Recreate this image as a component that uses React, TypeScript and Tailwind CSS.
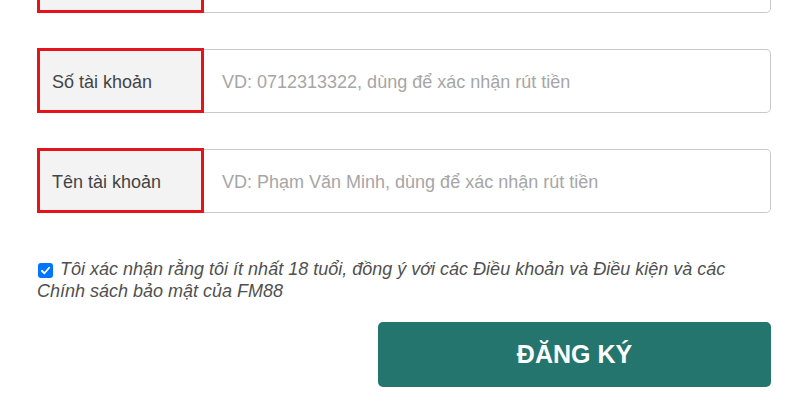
import React from "react";

const fields = [
    { label: "", placeholder: "" },
    { label: "Số tài khoản", placeholder: "VD: 0712313322, dùng để xác nhận rút tiền" },
    { label: "Tên tài khoản", placeholder: "VD: Phạm Văn Minh, dùng để xác nhận rút tiền" },
];

function FieldRow({ label, placeholder }: { label: string; placeholder: string }) {
    return (
        <div className="flex h-[65px]">
            <div className="w-[167px] shrink-0 h-full flex items-center pl-3 pt-[3px] border-[3px] border-[#e5141b] bg-[#f3f3f4] text-[18px] text-[#444]">
                {label}
            </div>
            <input
                placeholder={placeholder}
                className="flex-1 min-w-0 h-[64px] self-end border border-l-0 border-[#c9c9c9] rounded-r-[5px] px-[18px] pt-[2px] text-[18px] text-[#333] outline-none placeholder:text-[#a6a6a6] bg-white"
            />
        </div>
    );
}

export default function App() {
    return (
        <div className="w-[800px] h-[400px] overflow-hidden bg-white font-['Liberation_Sans',Arial,sans-serif]">
            <div className="ml-[37px] w-[734px] -mt-[52px] flex flex-col">
                <div className="flex flex-col gap-[35px]">
                    {fields.map((f, i) => (
                        <FieldRow key={i} label={f.label} placeholder={f.placeholder} />
                    ))}
                </div>

                {/* Terms */}
                <p className="mt-[45px] text-[18px] leading-[22px] italic text-[#505050]">
                    <span className="inline-flex items-center justify-center w-[15px] h-[15px] rounded-[3px] bg-[#0075ff] align-[-1px] mr-[7px] ml-px">
                        <svg viewBox="0 0 12 12" className="w-[11px] h-[11px]" fill="none">
                            <path d="M2 6.3 L4.8 9 L10 3" stroke="white" strokeWidth="2" strokeLinecap="round" strokeLinejoin="round" />
                        </svg>
                    </span>
                    Tôi xác nhận rằng tôi ít nhất 18 tuổi, đồng ý với các Điều khoản và Điều kiện và các Chính sách bảo mật của FM88
                </p>

                <button className="self-end mt-[20px] w-[393px] h-[65px] rounded-[5px] bg-[#25756f] text-white font-bold text-[25px]">
                    ĐĂNG KÝ
                </button>
            </div>
        </div>
    );
}
